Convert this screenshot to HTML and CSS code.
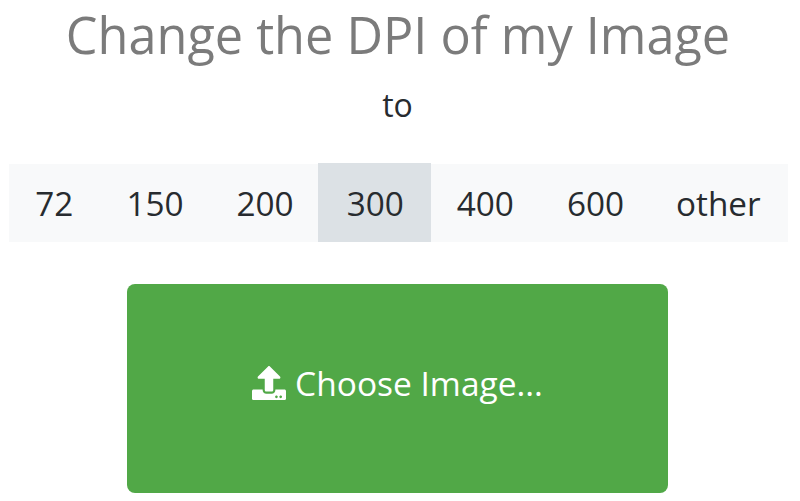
FILE: index.html
```html
<!DOCTYPE html>
<html lang="en">
<head>
  <meta charset="UTF-8" />
  <title>Change the DPI of my Image</title>
  <link rel="stylesheet" href="styles.css">
</head>
<body>
  <div class="page">
    <h1>Change the DPI of my Image</h1>
    <p class="to">to</p>
    <div class="dpi-bar">
      <a class="dpi-item">72</a>
      <a class="dpi-item">150</a>
      <a class="dpi-item">200</a>
      <a class="dpi-item active">300</a>
      <a class="dpi-item">400</a>
      <a class="dpi-item">600</a>
      <a class="dpi-item">other</a>
    </div>
    <button class="choose-btn">
      <svg class="upload-icon" viewBox="0 0 512 512" aria-hidden="true">
        <path fill="currentColor" d="M296 384h-80c-13.3 0-24-10.7-24-24V192h-87.700c-17.800 0-26.700-21.500-14.100-34.100L242.300 5.700c7.500-7.500 19.800-7.500 27.300 0l152.200 152.200c12.600 12.600 3.700 34.100-14.100 34.100H320v168c0 13.300-10.700 24-24 24zm216-8v112c0 13.300-10.700 24-24 24H24c-13.300 0-24-10.700-24-24V376c0-13.300 10.700-24 24-24h136v8c0 30.900 25.100 56 56 56h80c30.900 0 56-25.100 56-56v-8h136c13.300 0 24 10.700 24 24zm-124 88c0-11-9-20-20-20s-20 9-20 20 9 20 20 20 20-9 20-20zm64 0c0-11-9-20-20-20s-20 9-20 20 9 20 20 20 20-9 20-20z"/>
      </svg>
      Choose Image...
    </button>
  </div>
</body>
</html>
```

FILE: styles.css
```css
* {
  margin: 0;
  padding: 0;
  box-sizing: border-box;
}
body {
  background: #fff;
  font-family: "Open Sans", sans-serif;
  color: #272b2f;
  overflow: hidden;
}
.page {
  display: flex;
  flex-direction: column;
  align-items: center;
  width: 795px;
  height: 501px;
}
h1 {
  font-size: 50.4px;
  font-weight: 400;
  line-height: 68px;
  color: #7b7b7b;
  margin: 1px 0 0 1px;
}
.to {
  font-size: 32px;
  line-height: 42px;
  margin-top: 15px;
}
.dpi-bar {
  display: flex;
  height: 78px;
  margin: 38px 0 0 2px;
  background: #f8f9fa;
}
.dpi-item {
  display: flex;
  align-items: center;
  padding: 0 26.5px;
  font-size: 33.3px;
}
.dpi-item:last-child {
  padding: 0 27.5px 0 25.5px;
}
.dpi-item.active {
  margin: -1px -0.5px 0 -2.5px;
  padding: 1px 27px 0 29px;
  background: #dce1e5;
}
.choose-btn {
  display: flex;
  align-items: center;
  justify-content: center;
  gap: 9px;
  width: 541px;
  height: 209px;
  margin-top: 42px;
  padding-bottom: 12px;
  background: #51a847;
  color: #fff;
  border: none;
  border-radius: 8px;
  font-family: inherit;
  font-size: 33.5px;
}
.upload-icon {
  width: 34px;
  height: 34px;
}
```
